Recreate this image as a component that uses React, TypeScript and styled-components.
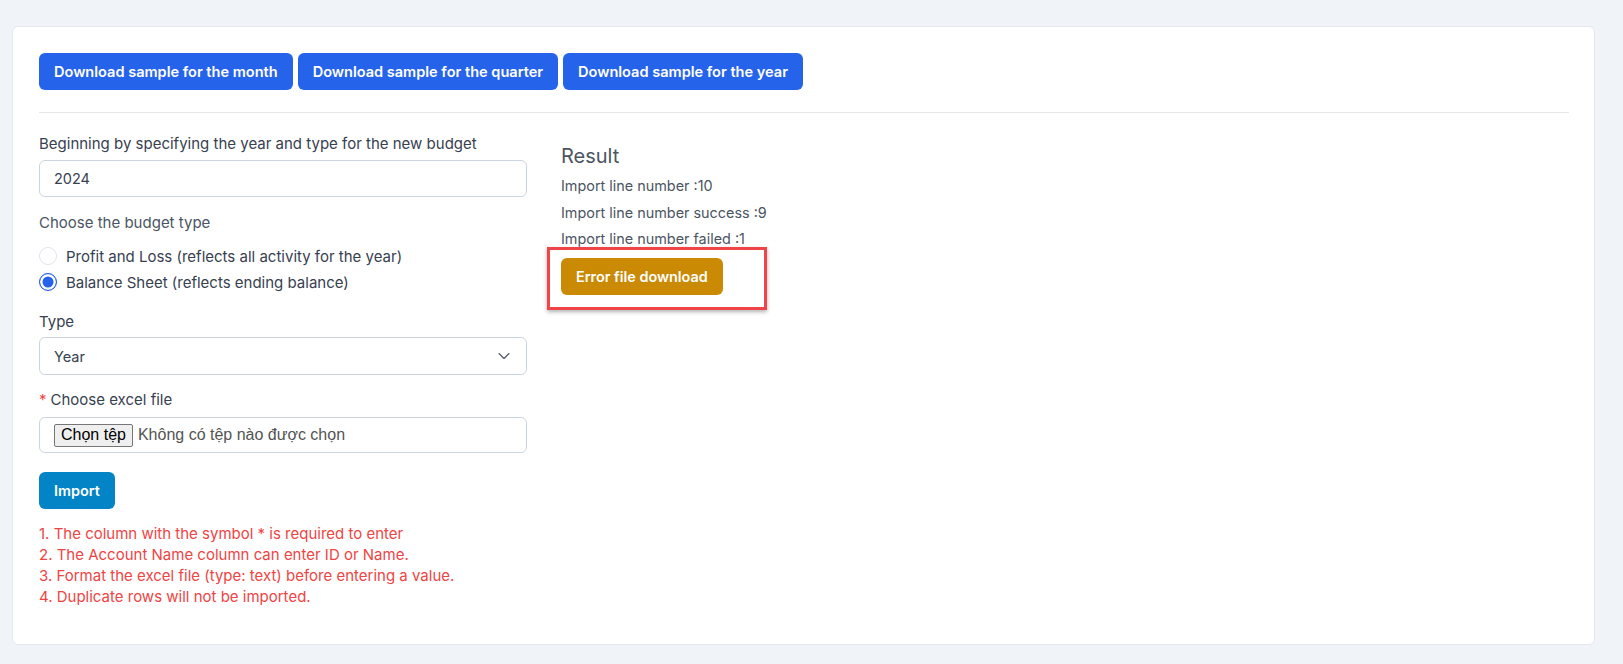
import { useState } from "react";
import styled, { createGlobalStyle } from "styled-components";

const GlobalStyle = createGlobalStyle`
  * { box-sizing: border-box; }
  body {
    margin: 0;
    background: #f0f3f8;
    font-family: Inter, "Noto Sans", sans-serif;
    color: #374151;
  }
`;

const Page = styled.div`
  padding: 26px 28px 17px 12px;
`;

const Card = styled.div`
  background: #fff;
  border: 1px solid #e3e8ef;
  border-radius: 6px;
  padding: 26px 25px 37px 26px;
`;

const SampleBar = styled.div`
  display: flex;
  gap: 5px;
`;

const SolidButton = styled.button<{ $tone: string; $size?: number }>`
  height: 37px;
  padding: 0 15px;
  border: none;
  border-radius: 6px;
  background: ${(p) => p.$tone};
  color: #fff;
  font-family: Inter, sans-serif;
  font-size: ${(p) => p.$size ?? 14.4}px;
  font-weight: 600;
  cursor: pointer;
  white-space: nowrap;
`;

const Divider = styled.hr`
  border: none;
  border-top: 1px solid #e5e7eb;
  margin: 22px 0 21px;
`;

const Columns = styled.div`
  display: grid;
  grid-template-columns: 488px 1fr;
  column-gap: 34px;
`;

const FormColumn = styled.div`
  display: flex;
  flex-direction: column;
`;

const FieldLabel = styled.label<{ $muted?: boolean; $gap?: number }>`
  display: block;
  font-size: 15px;
  line-height: 20px;
  color: ${(p) => (p.$muted ? "#4b5563" : "#374151")};
  margin-top: ${(p) => p.$gap ?? 0}px;
`;

const Required = styled.span`
  color: #ef4444;
  margin-right: 4px;
`;

const TextInput = styled.input`
  height: 37px;
  margin-top: 6px;
  padding: 0 14px;
  border: 1px solid #cbd5e1;
  border-radius: 6px;
  font-family: Inter, sans-serif;
  font-size: 14.5px;
  color: #374151;
  outline: none;
`;

const RadioGroup = styled.div`
  margin-top: 10px;
  display: flex;
  flex-direction: column;
`;

const RadioRow = styled.label`
  display: flex;
  align-items: center;
  gap: 9px;
  height: 26px;
  font-size: 15px;
  color: #374151;
  cursor: pointer;
`;

const RadioDot = styled.input`
  appearance: none;
  margin: 0;
  width: 18px;
  height: 18px;
  border-radius: 50%;
  border: 1px solid #dde2ea;
  background: #fff;
  cursor: pointer;

  &:checked {
    border: 1.5px solid #2563eb;
    background: #2563eb;
    box-shadow: inset 0 0 0 2.5px #fff;
  }
`;

const SelectBox = styled.div`
  position: relative;
  margin-top: 5px;
  height: 38px;
`;

const Select = styled.select`
  appearance: none;
  width: 100%;
  height: 100%;
  padding: 0 14px;
  border: 1px solid #cbd5e1;
  border-radius: 6px;
  background: #fff;
  font-family: Inter, sans-serif;
  font-size: 14.5px;
  color: #374151;
  outline: none;
`;

const Chevron = styled.svg`
  position: absolute;
  right: 17px;
  top: 15px;
  pointer-events: none;
`;

const FileBox = styled.label`
  display: flex;
  align-items: center;
  gap: 5px;
  height: 36px;
  margin-top: 7px;
  padding: 0 14px;
  border: 1px solid #cbd5e1;
  border-radius: 6px;
  font-family: "Liberation Sans", Arial, sans-serif;
  font-size: 16px;
  color: #545454;
  cursor: pointer;
`;

const FileButton = styled.span`
  display: inline-flex;
  align-items: center;
  height: 23px;
  padding: 0 6px;
  background: #efefef;
  border: 1px solid #767676;
  border-radius: 2px;
  color: #000;
`;

const HiddenFile = styled.input`
  display: none;
`;

const ImportRow = styled.div`
  margin-top: 19px;
`;

const Notes = styled.ol`
  list-style: none;
  margin: 14px 0 0;
  padding: 0;
  font-size: 15px;
  line-height: 21px;
  color: #ef4444;
`;

const ResultColumn = styled.div`
  padding-top: 8px;
`;

const ResultTitle = styled.h4`
  margin: 0;
  font-size: 20px;
  font-weight: 400;
  line-height: 28px;
  color: #4b5563;
`;

const ResultLine = styled.p`
  margin: 6px 0 0;
  font-size: 14.4px;
  line-height: 20.5px;
  color: #4b5563;
`;

const Highlight = styled.div`
  position: relative;
  display: inline-block;
  margin-top: 8px;

  &::after {
    content: "";
    position: absolute;
    top: -11px;
    left: -14px;
    right: -44px;
    bottom: -15px;
    border: 3px solid #ef4549;
    box-shadow: 0 2px 4px rgba(0, 0, 0, 0.3);
    pointer-events: none;
  }
`;

const notes = [
  "1. The column with the symbol * is required to enter",
  "2. The Account Name column can enter ID or Name.",
  "3. Format the excel file (type: text) before entering a value.",
  "4. Duplicate rows will not be imported.",
];

export default function App() {
  const [year, setYear] = useState("2024");
  const [budgetType, setBudgetType] = useState("balance");
  const [period, setPeriod] = useState("year");

  return (
    <Page>
      <GlobalStyle />
      <Card>
        <SampleBar>
          <SolidButton $tone="#2563eb" $size={14.55}>Download sample for the month</SolidButton>
          <SolidButton $tone="#2563eb" $size={14.55}>Download sample for the quarter</SolidButton>
          <SolidButton $tone="#2563eb" $size={14.55}>Download sample for the year</SolidButton>
        </SampleBar>
        <Divider />
        <Columns>
          <FormColumn>
            <FieldLabel>Beginning by specifying the year and type for the new budget</FieldLabel>
            <TextInput value={year} onChange={(e) => setYear(e.target.value)} />

            <FieldLabel $muted $gap={16}>Choose the budget type</FieldLabel>
            <RadioGroup>
              <RadioRow>
                <RadioDot
                  type="radio"
                  name="budgetType"
                  checked={budgetType === "pnl"}
                  onChange={() => setBudgetType("pnl")}
                />
                Profit and Loss (reflects all activity for the year)
              </RadioRow>
              <RadioRow>
                <RadioDot
                  type="radio"
                  name="budgetType"
                  checked={budgetType === "balance"}
                  onChange={() => setBudgetType("balance")}
                />
                Balance Sheet (reflects ending balance)
              </RadioRow>
            </RadioGroup>

            <FieldLabel $gap={17}>Type</FieldLabel>
            <SelectBox>
              <Select value={period} onChange={(e) => setPeriod(e.target.value)}>
                <option value="month">Month</option>
                <option value="quarter">Quarter</option>
                <option value="year">Year</option>
              </Select>
              <Chevron width="12" height="8" viewBox="0 0 12 8" fill="none">
                <path d="M1 1.5l5 5 5-5" stroke="#4b5563" strokeWidth="1.1" strokeLinecap="round" strokeLinejoin="round" />
              </Chevron>
            </SelectBox>

            <FieldLabel $gap={15}>
              <Required>*</Required>Choose excel file
            </FieldLabel>
            <FileBox>
              <FileButton>Chọn tệp</FileButton>
              Không có tệp nào được chọn
              <HiddenFile type="file" accept=".xlsx,.xls" />
            </FileBox>

            <ImportRow>
              <SolidButton $tone="#0284c7">Import</SolidButton>
            </ImportRow>

            <Notes>
              {notes.map((n) => (
                <li key={n}>{n}</li>
              ))}
            </Notes>
          </FormColumn>

          <ResultColumn>
            <ResultTitle>Result</ResultTitle>
            <ResultLine>Import line number :10</ResultLine>
            <ResultLine>Import line number success :9</ResultLine>
            <ResultLine>Import line number failed :1</ResultLine>
            <Highlight>
              <SolidButton $tone="#ca8a04">Error file download</SolidButton>
            </Highlight>
          </ResultColumn>
        </Columns>
      </Card>
    </Page>
  );
}
